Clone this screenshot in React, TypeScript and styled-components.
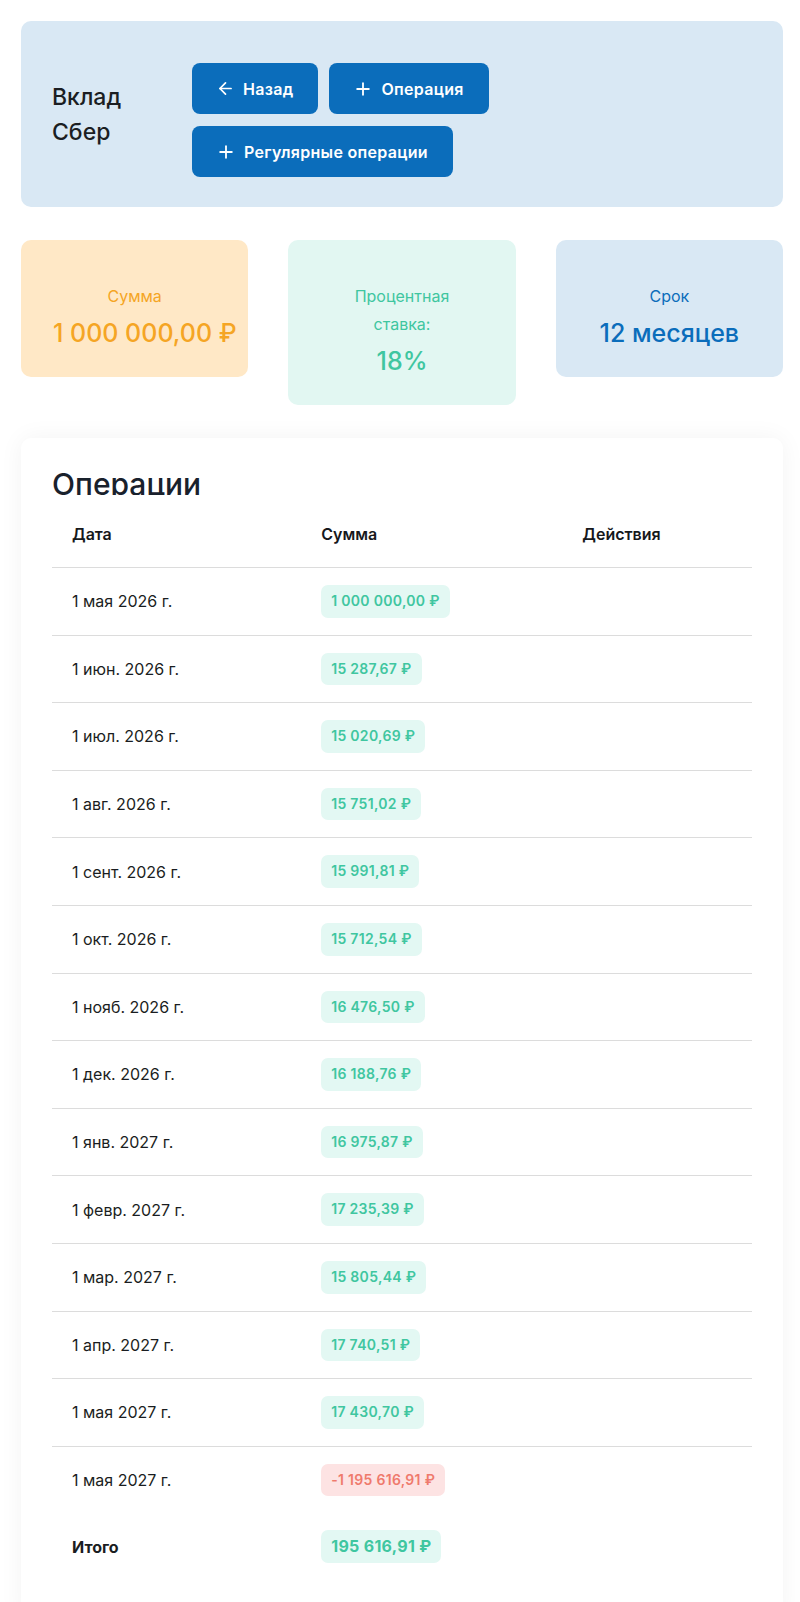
import styled, { createGlobalStyle } from 'styled-components';
import { ArrowLeft, Plus } from 'lucide-react';

const GlobalStyle = createGlobalStyle`
  body {
    margin: 0;
    background: #ffffff;
    font-family: Inter, "Noto Sans", "DejaVu Sans", sans-serif;
    color: #1a1d21;
  }
  * { box-sizing: border-box; }
`;

const Page = styled.div`
  display: flex;
  flex-direction: column;
  gap: 33px;
  padding: 21px 17px 40px 21px;
`;

const HeaderBox = styled.div`
  display: flex;
  align-items: flex-start;
  background: #d9e8f4;
  border-radius: 10px;
  padding: 42px 31px 30px;
`;

const Title = styled.div`
  flex: 0 0 140px;
  margin-top: 17px;
  font-size: 23px;
  line-height: 35px;
  font-weight: 500;
  color: #1b1e22;
`;

const Buttons = styled.div`
  display: flex;
  flex-wrap: wrap;
  gap: 12px 11px;
  max-width: 330px;
`;

const Button = styled.button`
  display: inline-flex;
  align-items: center;
  gap: 8px;
  height: 51px;
  padding: 0 25px 0 24px;
  border: none;
  border-radius: 8px;
  background: #0b6dbb;
  color: #ffffff;
  font-family: inherit;
  font-size: 16px;
  letter-spacing: 0.3px;
  font-weight: 600;
  cursor: pointer;
`;

const Stats = styled.div`
  display: grid;
  grid-template-columns: repeat(3, minmax(0, 1fr));
  gap: 40px;
  align-items: start;
`;

const StatCard = styled.div<{ $bg: string; $fg: string }>`
  background: ${(p) => p.$bg};
  color: ${(p) => p.$fg};
  border-radius: 10px;
  padding: 42px 32px 26px;
  text-align: center;
`;

const StatLabel = styled.div`
  font-size: 16px;
  line-height: 28px;
`;

const StatValue = styled.div`
  margin-top: 5px;
  font-size: 25px;
  line-height: 36px;
  font-weight: 500;
  white-space: nowrap;
`;

const Card = styled.div`
  background: #ffffff;
  border-radius: 10px;
  box-shadow: 0 0 24px rgba(0, 0, 0, 0.05);
  padding: 31px 31px 40px;
`;

const CardTitle = styled.h2`
  margin: 0;
  height: 26px;
  overflow: hidden;
  font-size: 30px;
  line-height: 30px;
  font-weight: 500;
  color: #19212c;
`;

const Table = styled.table`
  width: 100%;
  border-collapse: collapse;
  table-layout: fixed;
`;

const Th = styled.th<{ $w: string }>`
  width: ${(p) => p.$w};
  text-align: left;
  padding: 27px 20px 21px;
  font-size: 16px;
  line-height: 24px;
  font-weight: 600;
  color: #16181b;
  border-bottom: 1px solid #dcdcdc;
`;

const Row = styled.tr<{ $last?: boolean }>`
  border-bottom: ${(p) => (p.$last ? 'none' : '1px solid #dcdcdc')};
`;

const Td = styled.td<{ $bold?: boolean }>`
  padding: 17px 20px;
  font-size: 16px;
  line-height: 24px;
  font-weight: ${(p) => (p.$bold ? 700 : 400)};
  color: #1a1d21;
  vertical-align: middle;
`;

const Pill = styled.span<{ $neg?: boolean; $big?: boolean }>`
  display: inline-block;
  padding: 6px 10px;
  border-radius: 7px;
  font-size: ${(p) => (p.$big ? '16px' : '14px')};
  line-height: 20.6px;
  letter-spacing: 0.3px;
  font-weight: ${(p) => (p.$big ? 700 : 600)};
  white-space: nowrap;
  background: ${(p) => (p.$neg ? '#fde3e3' : '#e3f8f3')};
  color: ${(p) => (p.$neg ? '#ef7a6c' : '#3fc6a0')};
`;

const ops = [
  ['1 мая 2026 г.', '1 000 000,00 ₽'],
  ['1 июн. 2026 г.', '15 287,67 ₽'],
  ['1 июл. 2026 г.', '15 020,69 ₽'],
  ['1 авг. 2026 г.', '15 751,02 ₽'],
  ['1 сент. 2026 г.', '15 991,81 ₽'],
  ['1 окт. 2026 г.', '15 712,54 ₽'],
  ['1 нояб. 2026 г.', '16 476,50 ₽'],
  ['1 дек. 2026 г.', '16 188,76 ₽'],
  ['1 янв. 2027 г.', '16 975,87 ₽'],
  ['1 февр. 2027 г.', '17 235,39 ₽'],
  ['1 мар. 2027 г.', '15 805,44 ₽'],
  ['1 апр. 2027 г.', '17 740,51 ₽'],
  ['1 мая 2027 г.', '17 430,70 ₽'],
];

const App = () => {
  return (
    <>
      <GlobalStyle />
      <Page>
        <HeaderBox>
          <Title>
            Вклад
            <br />
            Сбер
          </Title>
          <Buttons>
            <Button>
              <ArrowLeft size={19} strokeWidth={2.2} />
              Назад
            </Button>
            <Button>
              <Plus size={20} strokeWidth={2.2} />
              Операция
            </Button>
            <Button>
              <Plus size={20} strokeWidth={2.2} />
              Регулярные операции
            </Button>
          </Buttons>
        </HeaderBox>

        <Stats>
          <StatCard $bg="#ffe8c6" $fg="#f5a524">
            <StatLabel>Сумма</StatLabel>
            <StatValue>1 000 000,00 ₽</StatValue>
          </StatCard>
          <StatCard $bg="#e2f7f2" $fg="#3fc6a0">
            <StatLabel>
              Процентная
              <br />
              ставка:
            </StatLabel>
            <StatValue>18%</StatValue>
          </StatCard>
          <StatCard $bg="#d9e8f4" $fg="#0b6dbb">
            <StatLabel>Срок</StatLabel>
            <StatValue>12 месяцев</StatValue>
          </StatCard>
        </Stats>

        <Card>
          <CardTitle>Операции</CardTitle>
          <Table>
            <thead>
              <tr>
                <Th $w="35.6%">Дата</Th>
                <Th $w="37.3%">Сумма</Th>
                <Th $w="27.1%">Действия</Th>
              </tr>
            </thead>
            <tbody>
              {ops.map(([date, sum], i) => (
                <Row key={i}>
                  <Td>{date}</Td>
                  <Td>
                    <Pill>{sum}</Pill>
                  </Td>
                  <Td />
                </Row>
              ))}
              <Row $last>
                <Td>1 мая 2027 г.</Td>
                <Td>
                  <Pill $neg>-1 195 616,91 ₽</Pill>
                </Td>
                <Td />
              </Row>
            </tbody>
            <tfoot>
              <Row $last>
                <Td $bold>Итого</Td>
                <Td>
                  <Pill $big>195 616,91 ₽</Pill>
                </Td>
                <Td />
              </Row>
            </tfoot>
          </Table>
        </Card>
      </Page>
    </>
  );
};

export default App;
